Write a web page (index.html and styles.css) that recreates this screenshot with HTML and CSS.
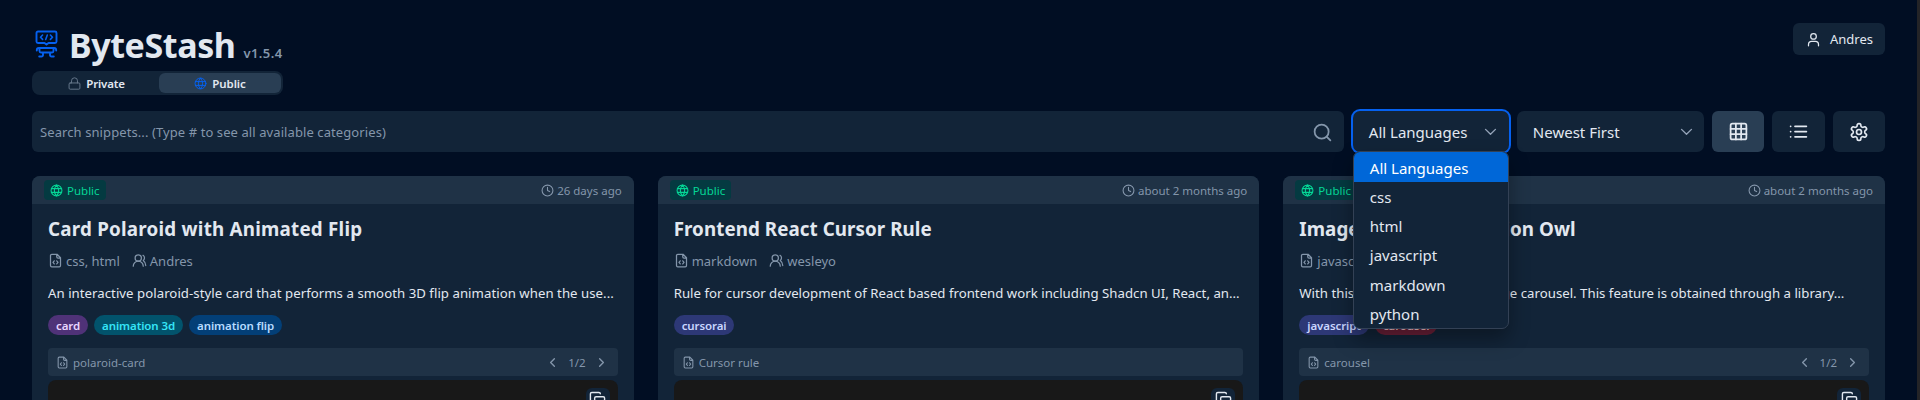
FILE: index.html
```html
<!DOCTYPE html>
<html lang="en">
<head>
<meta charset="utf-8">
<title>ByteStash</title>
<link rel="stylesheet" href="styles.css">
</head>
<body>
<svg class="sprite" aria-hidden="true">
  <symbol id="globe" viewBox="0 0 24 24"><circle cx="12" cy="12" r="10"/><path d="M12 2a14.500 14.500 0 0 0 0 20a14.500 14.500 0 0 0 0-20M2.600 8.500h18.800M2.600 15.500h18.800"/></symbol>
  <symbol id="lock" viewBox="0 0 24 24"><rect x="2" y="11" width="20" height="11.500" rx="2"/><path d="M6.500 11V7a5.500 5.500 0 0 1 11 0v4"/></symbol>
  <symbol id="clock" viewBox="0 0 24 24"><circle cx="12" cy="12" r="10"/><path d="M12 6v6l4 2"/></symbol>
  <symbol id="file" viewBox="0 0 24 24"><path d="M14.500 2H6a2 2 0 0 0-2 2v16a2 2 0 0 0 2 2h12a2 2 0 0 0 2-2V7.500zM14 2v4a2 2 0 0 0 2 2h4M10 12.500 8 15l2 2.500M14 12.500l2 2.500-2 2.500"/></symbol>
  <symbol id="users" viewBox="0 0 24 24"><path d="M18 21a8 8 0 0 0-16 0M22 20c0-3.370-2-6.500-4-8a5 5 0 0 0-.450-8.300"/><circle cx="10" cy="8" r="5"/></symbol>
  <symbol id="user" viewBox="0 0 24 24"><circle cx="12" cy="7" r="4.500"/><path d="M4 22v-2a5 5 0 0 1 5-5h6a5 5 0 0 1 5 5v2"/></symbol>
  <symbol id="left" viewBox="0 0 24 24"><path d="m15 18-6-6 6-6"/></symbol>
  <symbol id="right" viewBox="0 0 24 24"><path d="m9 18 6-6-6-6"/></symbol>
  <symbol id="down" viewBox="0 0 24 24"><path d="m5 9 7 7 7-7"/></symbol>
  <symbol id="search" viewBox="0 0 24 24"><circle cx="11" cy="11" r="8"/><path d="m21 21-4.300-4.300"/></symbol>
  <symbol id="grid" viewBox="0 0 24 24"><rect x="3" y="3" width="18" height="18" rx="2"/><path d="M3 9h18M3 15h18M9 3v18M15 3v18"/></symbol>
  <symbol id="list" viewBox="0 0 24 24"><path d="M8 6h13M8 12h13M8 18h13M3 6h.010M3 12h.010M3 18h.010"/></symbol>
  <symbol id="gear" viewBox="0 0 24 24"><path d="M12.220 2h-.440a2 2 0 0 0-2 2v.180a2 2 0 0 1-1 1.730l-.430.250a2 2 0 0 1-2 0l-.150-.080a2 2 0 0 0-2.730.730l-.220.380a2 2 0 0 0 .730 2.730l.150.100a2 2 0 0 1 1 1.720v.510a2 2 0 0 1-1 1.740l-.150.090a2 2 0 0 0-.730 2.730l.220.380a2 2 0 0 0 2.730.730l.150-.080a2 2 0 0 1 2 0l.430.250a2 2 0 0 1 1 1.730V20a2 2 0 0 0 2 2h.440a2 2 0 0 0 2-2v-.180a2 2 0 0 1 1-1.730l.430-.250a2 2 0 0 1 2 0l.150.080a2 2 0 0 0 2.730-.730l.220-.390a2 2 0 0 0-.730-2.730l-.150-.080a2 2 0 0 1-1-1.740v-.500a2 2 0 0 1 1-1.740l.150-.090a2 2 0 0 0 .730-2.730l-.220-.380a2 2 0 0 0-2.730-.730l-.150.080a2 2 0 0 1-2 0l-.430-.250a2 2 0 0 1-1-1.730V4a2 2 0 0 0-2-2z"/><circle cx="12" cy="12" r="3"/></symbol>
  <symbol id="copy" viewBox="0 0 24 24"><rect x="8" y="8" width="14" height="14" rx="2"/><path d="M4 16c-1.100 0-2-.900-2-2V4c0-1.100.900-2 2-2h10c1.100 0 2 .900 2 2"/></symbol>
</svg>

<main class="page">
  <header class="header">
    <div>
      <div class="brand">
        <svg class="logo" viewBox="0 0 24 28"><path d="M4 1.500h17a1.500 1.500 0 0 1 1.500 1.500v8.500a1.500 1.500 0 0 1-1.500 1.500h-6.500l-2 1.500-2-1.500H4a1.500 1.500 0 0 1-1.500-1.500V3A1.500 1.500 0 0 1 4 1.500z"/><path class="logo-code" d="m8.600 5-2.100 2.200 2.100 2.200M16.400 5l2.100 2.200-2.100 2.200M13.300 5l-1.600 4.400"/><path d="M2.800 20.500v-.500a2 2 0 0 1 2-2h15.400a2 2 0 0 1 2 2v.500M5.500 18v3a1.500 1.500 0 0 0 1.500 1.500h11a1.500 1.500 0 0 0 1.500-1.500v-3M5.200 26.500h2.300a1.500 1.500 0 0 0 1.500-1.500v-2.500M19.800 26.500h-2.300a1.500 1.500 0 0 1-1.500-1.500v-2.500"/></svg>
        <h1 class="title">ByteStash</h1>
        <span class="version">v1.5.4</span>
      </div>
      <div class="toggle">
        <button class="tab tab-private"><svg class="icon i13"><use href="#lock"/></svg>Private</button>
        <button class="tab tab-public"><svg class="icon i13"><use href="#globe"/></svg>Public</button>
      </div>
    </div>
    <button class="account"><svg class="icon i15"><use href="#user"/></svg>Andres</button>
  </header>

  <section class="toolbar">
    <div class="search"><span class="placeholder">Search snippets... (Type # to see all available categories)</span><svg class="icon i21"><use href="#search"/></svg></div>
    <div class="select select-open">
      <span>All Languages</span><svg class="icon chevron"><use href="#down"/></svg>
      <ul class="menu">
        <li class="option option-active">All Languages</li>
        <li class="option">css</li>
        <li class="option">html</li>
        <li class="option">javascript</li>
        <li class="option">markdown</li>
        <li class="option">python</li>
      </ul>
    </div>
    <div class="select select-sort"><span>Newest First</span><svg class="icon chevron"><use href="#down"/></svg></div>
    <div class="actions">
      <button class="action action-active"><svg class="icon i21"><use href="#grid"/></svg></button>
      <button class="action"><svg class="icon i21"><use href="#list"/></svg></button>
      <button class="action"><svg class="icon i20"><use href="#gear"/></svg></button>
    </div>
  </section>

  <section class="cards">
    <article class="card">
      <div class="card-top"><span class="badge"><svg class="icon i13"><use href="#globe"/></svg>Public</span><span class="age"><svg class="icon i13"><use href="#clock"/></svg>26 days ago</span></div>
      <div class="card-body">
        <h2 class="name name-flip">Card Polaroid with Animated Flip</h2>
        <div class="meta"><span class="meta-item"><svg class="icon i15"><use href="#file"/></svg>css, html</span><span class="meta-item"><svg class="icon i15"><use href="#users"/></svg>Andres</span></div>
        <p class="desc desc-flip">An interactive polaroid-style card that performs a smooth 3D flip animation when the use...</p>
        <div class="tags"><span class="tag purple">card</span><span class="tag cyan">animation 3d</span><span class="tag blue">animation flip</span></div>
        <div class="file"><span class="file-name"><svg class="icon i13"><use href="#file"/></svg>polaroid-card</span><span class="pager"><svg class="icon i15"><use href="#left"/></svg>1/2<svg class="icon i15"><use href="#right"/></svg></span></div>
        <div class="code"><button class="copy"><svg class="icon i17"><use href="#copy"/></svg></button></div>
      </div>
    </article>
    <article class="card">
      <div class="card-top"><span class="badge"><svg class="icon i13"><use href="#globe"/></svg>Public</span><span class="age"><svg class="icon i13"><use href="#clock"/></svg>about 2 months ago</span></div>
      <div class="card-body">
        <h2 class="name">Frontend React Cursor Rule</h2>
        <div class="meta"><span class="meta-item"><svg class="icon i15"><use href="#file"/></svg>markdown</span><span class="meta-item"><svg class="icon i15"><use href="#users"/></svg>wesleyo</span></div>
        <p class="desc">Rule for cursor development of React based frontend work including Shadcn UI, React, an...</p>
        <div class="tags"><span class="tag indigo">cursorai</span></div>
        <div class="file"><span class="file-name"><svg class="icon i13"><use href="#file"/></svg>Cursor rule</span></div>
        <div class="code"><button class="copy"><svg class="icon i17"><use href="#copy"/></svg></button></div>
      </div>
    </article>
    <article class="card">
      <div class="card-top"><span class="badge"><svg class="icon i13"><use href="#globe"/></svg>Public</span><span class="age"><svg class="icon i13"><use href="#clock"/></svg>about 2 months ago</span></div>
      <div class="card-body">
        <h2 class="name">Image Carousel Function Owl</h2>
        <div class="meta"><span class="meta-item"><svg class="icon i15"><use href="#file"/></svg>javascript</span></div>
        <p class="desc">With this you can create one image carousel. This feature is obtained through a library...</p>
        <div class="tags"><span class="tag indigo">javascript</span><span class="tag red">carousel</span></div>
        <div class="file"><span class="file-name"><svg class="icon i13"><use href="#file"/></svg>carousel</span><span class="pager"><svg class="icon i15"><use href="#left"/></svg>1/2<svg class="icon i15"><use href="#right"/></svg></span></div>
        <div class="code"><button class="copy"><svg class="icon i17"><use href="#copy"/></svg></button></div>
      </div>
    </article>
  </section>
</main>
</body>
</html>
```

FILE: styles.css
```css
* { box-sizing: border-box; }

html { height: 100%; overflow: hidden; background: #010e23; }

body {
  display: flex;
  height: 400px;
  margin: 0;
  overflow: hidden;
  background: #010e23;
  border-right: 3px solid #242427;
  color: #e2e8f0;
  font-family: "Noto Sans", "Open Sans", sans-serif;
}

button { border: 0; padding: 0; margin: 0; font: inherit; color: inherit; background: none; }

.sprite { position: absolute; width: 0; height: 0; }

.icon {
  flex: none;
  fill: none;
  stroke: currentColor;
  stroke-width: 2;
  stroke-linecap: round;
  stroke-linejoin: round;
}
.i13 { width: 13px; height: 13px; }
.i15 { width: 15px; height: 15px; }
.i17 { width: 17px; height: 17px; }
.i20 { width: 20px; height: 20px; }
.i21 { width: 21px; height: 21px; }

.page { flex: 1; height: 400px; padding: 23px 32px 0; overflow: hidden; }

.header { display: flex; justify-content: space-between; align-items: flex-start; height: 72px; }

.brand { display: flex; align-items: baseline; height: 42px; padding-top: 2px; margin-left: 2px; }
.logo {
  align-self: flex-start;
  width: 24px;
  height: 28px;
  margin: 5px 11px 0 0;
  fill: none;
  stroke: #0561f0;
  stroke-width: 1.900;
  stroke-linecap: round;
  stroke-linejoin: round;
}
.logo-code { stroke-width: 1.600; }
.title { margin: 0; font-size: 34px; line-height: 40px; font-weight: 700; letter-spacing: -0.400px; }
.version { margin-left: 8px; font-size: 13px; font-weight: 600; letter-spacing: 0.400px; color: #8496ab; }

.toggle {
  display: flex;
  width: 251px;
  height: 24px;
  margin-top: 6px;
  padding: 2px;
  border-radius: 8px;
  background: #122438;
}
.tab {
  display: flex;
  align-items: center;
  justify-content: center;
  gap: 5px;
  border-radius: 6px;
  font-size: 11.500px;
  font-weight: 600;
}
.tab .icon { stroke-width: 1.800; }
.tab-private { width: 125px; letter-spacing: -0.200px; }
.tab-private .icon { color: #66778b; }
.tab-public { flex: 1; background: #293e54; letter-spacing: -0.100px; }
.tab-public .icon { color: #0561f0; }

.account {
  display: flex;
  align-items: center;
  gap: 9px;
  width: 92px;
  height: 32px;
  padding-left: 13px;
  border-radius: 6px;
  background: #122438;
  font-size: 13px;
}

.toolbar { display: flex; height: 41px; margin-top: 16px; }

.search {
  display: flex;
  flex: 1;
  align-items: center;
  justify-content: space-between;
  padding: 1px 11px 0 8px;
  border-radius: 6px;
  background: #122438;
  color: #8496ab;
  font-size: 13px;
}
.placeholder { letter-spacing: 0.090px; }

.select {
  position: relative;
  display: flex;
  align-items: center;
  justify-content: space-between;
  border-radius: 7px;
  background: #122438;
  font-size: 15px;
}
.select-open { width: 156px; margin: 0 8px 0 9px; padding: 0 10px 0 16px; box-shadow: 0 0 0 2px #0561f0; }
.select-sort { width: 187px; padding: 0 9px 0 16px; }
.chevron { width: 17px; height: 17px; stroke-width: 1.900; color: #94a3b8; }

.menu {
  position: absolute;
  top: 40px;
  left: 0;
  z-index: 2;
  width: 156px;
  height: 178px;
  margin: 0;
  padding: 0;
  overflow: hidden;
  list-style: none;
  background: #122438;
  border: 1px solid #334155;
  border-radius: 7px;
  box-shadow: 0 10px 20px rgba(0, 0, 0, 0.350);
}
.option { height: 29.200px; padding-left: 16px; line-height: 31px; font-size: 15px; }
.option-active { height: 30px; line-height: 33px; background: #0067d8; color: #fff; }

.actions { display: flex; gap: 8px; margin-left: 8px; }
.action {
  display: flex;
  align-items: center;
  justify-content: center;
  width: 52.400px;
  border-radius: 6px;
  background: #122438;
}
.action-active { background: #293e54; }

.cards { display: grid; grid-template-columns: repeat(3, 1fr); gap: 24px; margin-top: 23.600px; }

.card { height: 224.400px; overflow: hidden; border-radius: 8px 8px 0 0; background: #122438; }
.card-top {
  display: flex;
  align-items: center;
  justify-content: space-between;
  height: 28.200px;
  padding: 1px 12px 0;
  background: #1f3246;
  font-size: 11.500px;
}
.badge {
  display: flex;
  align-items: center;
  gap: 4px;
  height: 20px;
  padding: 0 6px;
  border-radius: 4px;
  background: #043a41;
  color: #05d696;
}
.age { display: flex; align-items: center; gap: 3px; color: #8496ab; }

.card-body { padding: 11px 16px 0; }
.name { margin: 0; font-size: 18.800px; line-height: 28px; font-weight: 700; letter-spacing: 0.060px; white-space: nowrap; }
.name-flip { letter-spacing: 0.220px; }
.meta { display: flex; gap: 12px; height: 20px; margin-top: 8px; color: #8496ab; font-size: 13px; line-height: 20px; }
.meta-item { display: flex; align-items: center; gap: 3px; }
.desc { height: 20px; margin: 12px 0 0; font-size: 13.200px; line-height: 20px; letter-spacing: 0.020px; white-space: nowrap; }
.desc-flip { letter-spacing: 0.045px; }
.tags { display: flex; gap: 6px; margin-top: 12px; }
.tag {
  height: 20.500px;
  padding: 0 8px;
  border-radius: 11px;
  font-size: 11.500px;
  line-height: 21px;
  font-weight: 600;
  letter-spacing: -0.100px;
}
.purple { background: #4f3278; color: #e9d5ff; }
.cyan { background: #02536c; color: #35e5f7; }
.blue { background: #033f77; color: #b6dbff; }
.indigo { background: #2d3876; color: #c9d5ff; }
.red { background: #6b2038; color: #fbc5cd; }

.file {
  display: flex;
  align-items: center;
  justify-content: space-between;
  height: 28px;
  margin-top: 12.500px;
  padding: 1px 8px 0;
  border-radius: 4px;
  background: #1f3246;
  color: #8496ab;
  font-size: 11.500px;
}
.file-name { display: flex; align-items: center; gap: 4px; }
.pager { display: flex; align-items: center; gap: 8px; padding-right: 1px; }
.pager .icon { stroke-width: 2.200; }

.code { display: flex; justify-content: flex-end; height: 90px; margin-top: 4px; padding: 8px; border-radius: 8px; background: #181818; }
.copy { display: flex; align-items: center; justify-content: center; width: 24px; height: 24px; border-radius: 6px; background: #122438; }
```
